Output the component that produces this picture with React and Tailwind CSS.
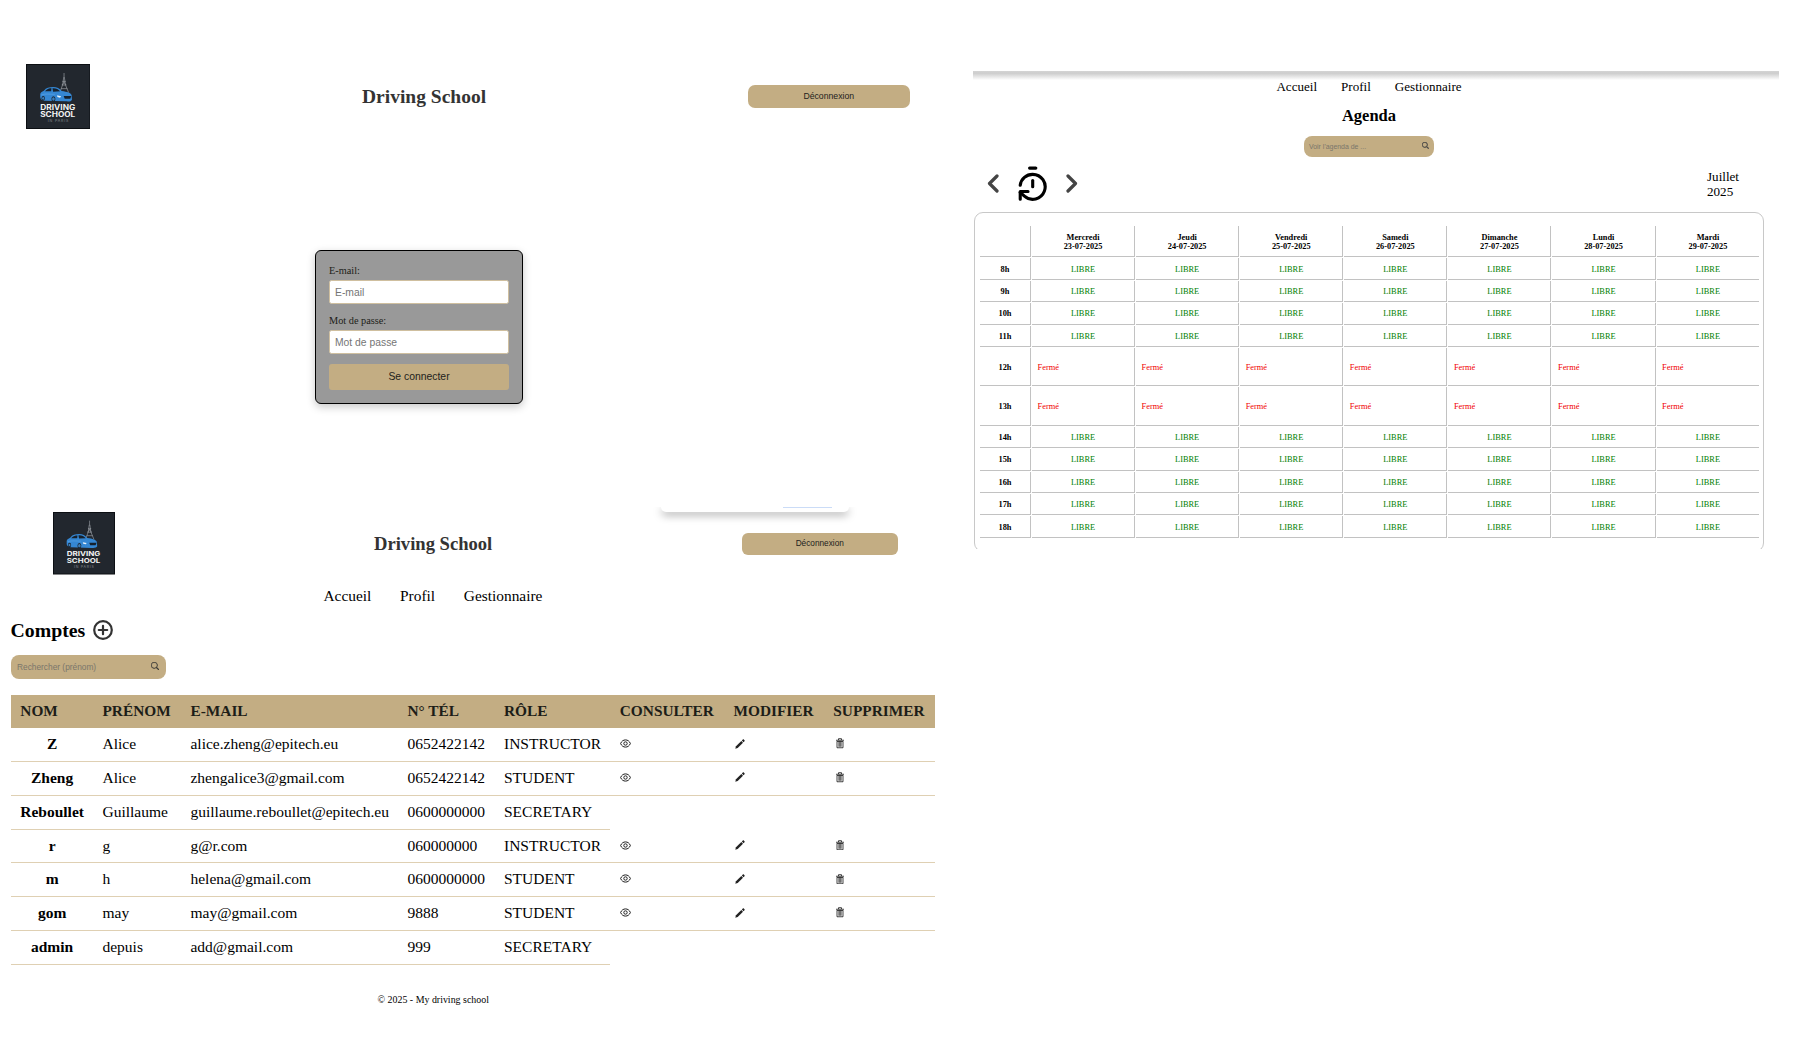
import React from "react";
import { TimerReset } from "lucide-react";
import { BsSearch } from "react-icons/bs";

const SANS = "font-['Liberation_Sans',Arial,sans-serif]";

function Logo({ className }) {
  return (
    <svg viewBox="0 0 195 195" preserveAspectRatio="none" className={className} aria-label="Driving School in Paris">
      <rect width="195" height="195" fill="#0c0f13" />
      <rect x="3" y="3" width="189" height="189" fill="#22272e" />
      <g stroke="#9a9fa5" strokeWidth="2" fill="none">
        <path d="M115 27V42M114 40L111 62L102 86M116 40L119 62L129 86" />
        <path d="M110 52H120M108 63H122M106 74H125M112 52L121 63M118 52L109 63" />
      </g>
      <path d="M43 91C43 85 48 83 54 80C61 71 70 69 82 69C94 69 101 73 108 81C124 83 137 87 138 94L139 107C137 112 130 113 121 112L56 110C47 109 43 105 43 99Z" fill="#3587d3" />
      <path d="M57 82C64 74 71 73 77 73L76 82ZM80 73C91 72 97 76 103 82L82 83Z" fill="#17212c" />
      <path d="M46 93C60 88 72 91 87 91" stroke="#5aa5e6" strokeWidth="2" fill="none" />
      <path d="M114 96H137L134 104H117Z" fill="#14202d" />
      <path d="M94 94L106 97L103 101L95 99Z" fill="#e8f3fc" />
      <ellipse cx="83" cy="105" rx="6" ry="8" fill="#1a2634" />
      <ellipse cx="83" cy="105" rx="4" ry="5" fill="#3f7fb8" />
      <ellipse cx="52" cy="103" rx="5" ry="7" fill="#1a2634" />
      <ellipse cx="52" cy="103" rx="3" ry="4" fill="#3f7fb8" />
      <g fill="#f3f3f3" fontFamily="Inter, 'Liberation Sans', sans-serif" fontWeight="700">
        <text x="43" y="137" fontSize="21" textLength="106" lengthAdjust="spacingAndGlyphs">DRIVING</text>
        <text x="43" y="160" fontSize="21" textLength="106" lengthAdjust="spacingAndGlyphs">SCHOOL</text>
      </g>
      <text x="66" y="175" fontSize="11" fill="#8a8e93" fontFamily="Inter, sans-serif" textLength="62">IN PARIS</text>
    </svg>
  );
}

function Field({ label, type }) {
  return (
    <label className="flex flex-col text-[10.3px] leading-[12px] text-[#1d1d18]">
      <span className="mb-[3px]">{label}:</span>
      <input
        type={type}
        placeholder={label}
        className="h-[24px] w-full rounded-[2.5px] border border-[#cfbf9f] bg-white px-[5px] font-['Liberation_Sans',Arial,sans-serif] text-[10.35px] placeholder:text-[#757575]"
      />
    </label>
  );
}

function LoginScreen() {
  return (
    <section className="flex h-[507px] flex-col overflow-hidden">
      <header className="mt-[63px] flex h-[66px] items-center pl-[25.5px]">
        <Logo className="h-[65px] w-[64.5px]" />
        <h1 className="ml-[272px] w-[385.5px] pt-[2px] text-[19.5px] leading-[24px] font-bold text-[#333]">Driving School</h1>
        <button className={`h-[23px] w-[162.5px] rounded-[7px] bg-[#c3ad83] pt-[2px] text-[8.7px] text-[#22221c] ${SANS}`}>
          Déconnexion
        </button>
      </header>
      <form className="mt-[121px] ml-[315px] flex h-[154px] w-[208px] flex-col rounded-[6px] border-[1.5px] border-black bg-[#999] px-[13px] pt-[14px] shadow-[0_3px_8px_rgba(0,0,0,0.22)]">
        <Field label="E-mail" type="text" />
        <div className="h-[11px]" />
        <Field label="Mot de passe" type="text" />
        <button className={`mt-[10px] h-[26px] rounded-[3px] bg-[#c3ad83] text-[10.4px] text-[#22221c] ${SANS}`}>
          Se connecter
        </button>
      </form>
    </section>
  );
}

const accounts = [
  ["Z", "Alice", "alice.zheng@epitech.eu", "0652422142", "INSTRUCTOR"],
  ["Zheng", "Alice", "zhengalice3@gmail.com", "0652422142", "STUDENT"],
  ["Reboullet", "Guillaume", "guillaume.reboullet@epitech.eu", "0600000000", "SECRETARY"],
  ["r", "g", "g@r.com", "060000000", "INSTRUCTOR"],
  ["m", "h", "helena@gmail.com", "0600000000", "STUDENT"],
  ["gom", "may", "may@gmail.com", "9888", "STUDENT"],
  ["admin", "depuis", "add@gmail.com", "999", "SECRETARY"],
];

const headings = ["NOM", "PRÉNOM", "E-MAIL", "N° TÉL", "RÔLE", "CONSULTER", "MODIFIER", "SUPPRIMER"];
const columns = "grid grid-cols-[82.2px_88px_217px_96.5px_115.8px_113.7px_99.8px_110.7px]";

function EyeIcon() {
  return (
    <svg viewBox="0 0 22 18" className="h-[9px] w-[11px]" fill="none" stroke="currentColor" strokeWidth="2">
      <path d="M1.2 9C3.2 4.2 6.8 1.8 11 1.8S18.8 4.2 20.8 9C18.8 13.8 15.2 16.2 11 16.2S3.2 13.8 1.2 9Z" />
      <circle cx="11" cy="9" r="3.4" />
    </svg>
  );
}

function PencilIcon() {
  return (
    <svg viewBox="0 0 20 20" className="size-[10px]" fill="currentColor">
      <path d="M0.5 19.5L2 14.6L12.6 4L16 7.4L5.4 18Z" />
      <path d="M13.7 2.9L15.6 1C16.2 0.4 17 0.4 17.6 1L19 2.4C19.6 3 19.6 3.8 19 4.4L17.1 6.3Z" />
    </svg>
  );
}

function TrashIcon() {
  return (
    <svg viewBox="0 0 16 21" className="h-[10.5px] w-[8px]" fill="none" stroke="currentColor" strokeWidth="1.7">
      <path d="M0 4.5H16M5 4V1.4H11V4M2 7V19.5H14V7M5.9 7V17.5M8 7V17.5M10.1 7V17.5M1.5 7H14.5" />
    </svg>
  );
}

function AccountRow({ account }) {
  const [name, ...rest] = account;
  const editable = account[4] !== "SECRETARY";
  const cell = "flex h-[33.8px] items-center border-b border-[#dfd0b3]";
  return (
    <div className={columns}>
      <div className={`${cell} justify-center pb-px font-bold`}>{name}</div>
      {rest.map((value, i) => (
        <div key={i} className={`${cell} pb-px pl-[9.3px] whitespace-nowrap`}>{value}</div>
      ))}
      {editable && (
        <>
          <div className={`${cell} pb-[2px] pl-[9.7px] text-[#222]`}><EyeIcon /></div>
          <div className={`${cell} pb-[2px] pl-[10.7px] text-[#222]`}><PencilIcon /></div>
          <div className={`${cell} pb-[2px] pl-[11.7px] text-[#222]`}><TrashIcon /></div>
        </>
      )}
    </div>
  );
}

function AccountsScreen() {
  return (
    <section className="flex h-[533px] flex-col">
      <div className="flex h-[24px] shrink-0 justify-center overflow-hidden pl-[536px]">
        <div className="flex h-[5px] w-[188px] justify-end rounded-b-[9px] bg-white pr-[17px] shadow-[0_3px_9px_rgba(0,0,0,0.38)]">
          <div className="h-px w-[49px] bg-[#cbdcf7]" />
        </div>
      </div>
      <header className="-mt-[19px] flex h-[63px] shrink-0 items-center pl-[52.5px]">
        <Logo className="relative h-[62.5px] w-[62px]" />
        <h1 className="ml-[259.5px] w-[368px] text-[18.6px] leading-[24px] font-bold text-[#333]">Driving School</h1>
        <button className={`h-[22px] w-[155.5px] rounded-[6px] bg-[#c3ad83] pt-[2px] text-[8.25px] text-[#22221c] ${SANS}`}>
          Déconnexion
        </button>
      </header>
      <nav className="mt-[11px] ml-[323.5px] flex h-[20px] items-center gap-[28.7px] text-[15.4px] leading-[20px]">
        <a>Accueil</a>
        <a>Profil</a>
        <a>Gestionnaire</a>
      </nav>
      <div className="mt-[11px] ml-[10.5px] flex h-[26px] items-center gap-[8px]">
        <h2 className="text-[19.8px] leading-[26px] font-bold">Comptes</h2>
        <svg viewBox="0 0 20 20" className="size-[20px]" fill="none" stroke="#333" strokeWidth="2.2" strokeLinecap="round">
          <circle cx="10" cy="10" r="8.8" />
          <path d="M10 5.8V14.2M5.8 10H14.2" />
        </svg>
      </div>
      <div className={`mt-[12px] ml-[11px] flex h-[24px] w-[155px] items-center justify-between rounded-[8px] bg-[#c3ad83] pr-[7px] pl-[6px] text-[8.33px] text-[#7a766b] ${SANS}`}>
        <span>Rechercher (prénom)</span>
        <BsSearch className="mb-[2px] size-[8px] text-[#333]" strokeWidth={0.6} />
      </div>
      <div className="mt-[15.5px] ml-[11px] w-[923.7px] text-[15.5px] leading-[20px]">
        <div className={`${columns} h-[33.8px] items-center bg-[#c3ad83] pb-px text-[15.35px] font-bold text-[#1d1d18]`}>
          {headings.map((heading) => (
            <div key={heading} className="pl-[9.3px] whitespace-nowrap">{heading}</div>
          ))}
        </div>
        {accounts.map((account) => <AccountRow key={account[0]} account={account} />)}
      </div>
      <footer className="mt-[28px] ml-[377.5px] text-[9.93px] leading-[14px]">© 2025 - My driving school</footer>
    </section>
  );
}

const days = [
  ["Mercredi", "23-07-2025"],
  ["Jeudi", "24-07-2025"],
  ["Vendredi", "25-07-2025"],
  ["Samedi", "26-07-2025"],
  ["Dimanche", "27-07-2025"],
  ["Lundi", "28-07-2025"],
  ["Mardi", "29-07-2025"],
];
const hours = [8, 9, 10, 11, 12, 13, 14, 15, 16, 17, 18];
const agendaColumns = "grid grid-cols-[51px_repeat(6,103.1px)_102.8px] gap-x-px";

function AgendaTable() {
  const line = "border-[#c2c2c2]";
  return (
    <div className="mt-[13px] ml-[5px] flex flex-col gap-px text-[8.4px] leading-[9.3px]">
      <div className={agendaColumns}>
        <div className={`h-[31.5px] border-r border-b ${line}`} />
        {days.map(([day, date], i) => (
          <div key={day} className={`${i < 6 ? "border-r" : ""} h-[31.5px] border-b pt-[7px] text-center text-[8.3px] font-bold ${line}`}>
            {day}<br />{date}
          </div>
        ))}
      </div>
      {hours.map((hour) => {
        const closed = hour === 12 || hour === 13;
        const height = closed ? "h-[38.25px]" : "h-[21.45px]";
        return (
          <div key={hour} className={agendaColumns}>
            <div className={`flex items-center justify-center border-r border-b pt-px font-bold ${height} ${line}`}>{hour}h</div>
            {days.map(([day], i) => (
              <div
                key={day}
                className={`flex items-center border-b pt-px ${i < 6 ? "border-r" : ""} ${height} ${line} ${closed ? "pl-[5.5px] text-[#f00000]" : "justify-center text-[#008000]"}`}
              >
                {closed ? "Fermé" : "LIBRE"}
              </div>
            ))}
          </div>
        );
      })}
    </div>
  );
}

function Chevron({ d, className }) {
  return (
    <svg viewBox="0 0 12 19" className={`h-[19px] w-[12px] ${className}`} fill="none" stroke="#444" strokeWidth="3.2" strokeLinecap="round" strokeLinejoin="round">
      <path d={d} />
    </svg>
  );
}

function AgendaScreen() {
  return (
    <section className="mt-[71px] flex h-[478px] w-[806px] flex-col overflow-hidden">
      <div className="h-[9px] shrink-0 bg-linear-to-b from-[#d4d4d4] via-[#cdcdcd] via-25% to-white" />
      <div className="-mt-[4px] flex flex-col items-center pr-[14px]">
        <nav className="flex h-[22px] items-center gap-[24px] text-[13.07px] leading-[20px]">
          <a>Accueil</a>
          <a>Profil</a>
          <a>Gestionnaire</a>
        </nav>
        <h2 className="mt-[8px] text-[16.5px] leading-[20px] font-bold">Agenda</h2>
        <div className={`mt-[10.4px] flex h-[20.4px] w-[130px] items-center justify-between rounded-[8px] bg-[#c3ad83] pt-px pr-[5.5px] pl-[5px] text-[6.93px] text-[#7a766b] ${SANS}`}>
          <span>Voir l'agenda de ...</span>
          <BsSearch className="mb-[3px] size-[6.8px] text-[#444]" strokeWidth={1} />
        </div>
      </div>
      <div className="flex h-[55.2px] shrink-0 items-center pb-[2px] pl-[14px]">
        <Chevron className="" d="M10 2L2.5 9.5L10 17" />
        <TimerReset className="ml-[15px] size-[37.4px] text-black" strokeWidth={2} />
        <Chevron className="ml-[15px]" d="M2 2L9.5 9.5L2 17" />
        <div className="mt-[2px] ml-auto w-[72px] text-[13.1px] leading-[15.2px]">Juillet<br />2025</div>
      </div>
      <div className="ml-px h-[340px] w-[789.5px] shrink-0 rounded-[9px] border-[1.5px] border-[#c8c8c8]">
        <AgendaTable />
      </div>
    </section>
  );
}

export default function App() {
  return (
    <main className="flex h-[1040px] w-[1806px] overflow-hidden bg-white font-['Liberation_Serif','Times_New_Roman',serif] text-black">
      <div className="flex w-[973px] shrink-0 flex-col">
        <LoginScreen />
        <AccountsScreen />
      </div>
      <AgendaScreen />
    </main>
  );
}
